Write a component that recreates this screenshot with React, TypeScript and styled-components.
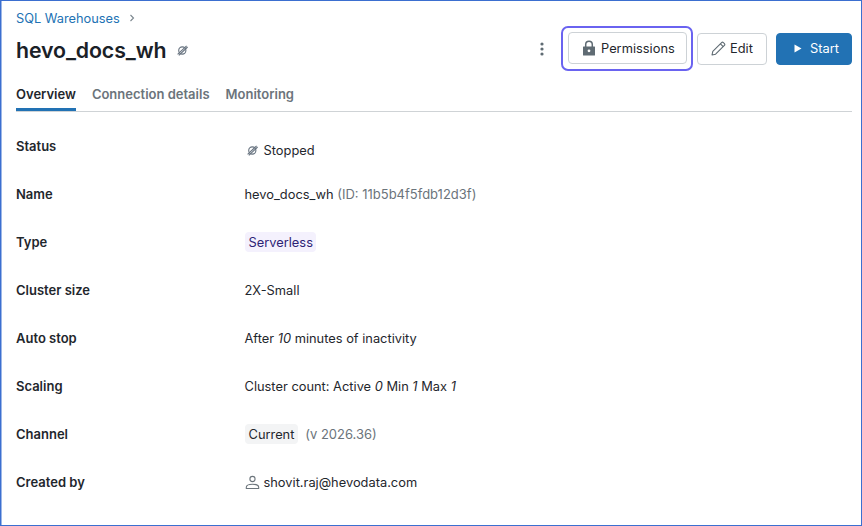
import React from 'react'
import styled, { createGlobalStyle } from 'styled-components'

const GlobalStyle = createGlobalStyle`
  html, body {
    margin: 0;
    padding: 0;
    background: #fff;
  }
  body {
    font-family: Inter, "Liberation Sans", sans-serif;
    color: #1f272d;
  }
`

const Frame = styled.div`
  box-sizing: border-box;
  width: 862px;
  height: 526px;
  border: 1px solid #3b6fd0;
  box-shadow: inset 1px 0 0 rgba(59, 111, 208, 0.5);
  padding: 0 9px 0 15px;
  background: #fff;
  overflow: hidden;
`

const Breadcrumb = styled.div`
  display: flex;
  align-items: center;
  gap: 8px;
  height: 16px;
  margin-top: 9px;
  font-size: 12.8px;
  color: #2272b4;

  svg {
    color: #7b868e;
  }
`

const HeaderRow = styled.div`
  display: flex;
  align-items: center;
  justify-content: space-between;
  height: 45px;
`

const TitleGroup = styled.div`
  display: flex;
  align-items: center;
  gap: 11px;
  margin-top: 3px;
`

const Title = styled.h1`
  margin: 0;
  font-size: 21.3px;
  font-weight: 600;
  letter-spacing: -0.1px;
  color: #1a2127;
`

const Actions = styled.div`
  display: flex;
  align-items: center;
`

const MoreButton = styled.div`
  display: flex;
  margin-right: 17px;
  color: #5f6b73;
`

const FocusRing = styled.div`
  display: flex;
  padding: 4px 4px 5px 5px;
  border: 2px solid #6a63f0;
  border-radius: 7px;
  margin-right: 4px;
`

const Button = styled.div<{ $primary?: boolean }>`
  box-sizing: border-box;
  display: flex;
  align-items: center;
  height: 32px;
  border-radius: 4px;
  font-size: 12.85px;
  border: 1px solid ${({ $primary }) => ($primary ? '#2272b4' : '#cdd2d6')};
  background: ${({ $primary }) => ($primary ? '#2272b4' : '#fff')};
  color: ${({ $primary }) => ($primary ? '#fff' : '#1f272d')};
`

const PermissionsButton = styled(Button)`
  width: 119px;
  gap: 5px;
  padding-left: 13px;
`

const EditButton = styled(Button)`
  width: 70px;
  gap: 4px;
  padding-left: 13px;
  margin-right: 9px;
`

const StartButton = styled(Button)`
  width: 76px;
  gap: 8px;
  padding-left: 17px;
`

const Tabs = styled.div`
  box-sizing: border-box;
  display: flex;
  gap: 16px;
  height: 41px;
  border-bottom: 1px solid #cfd3d6;
`

const Tab = styled.div<{ $active?: boolean }>`
  box-sizing: border-box;
  height: 40px;
  padding-top: 15px;
  font-size: 13px;
  font-weight: 600;
  color: ${({ $active }) => ($active ? '#1f272d' : '#6b747b')};
  border-bottom: 3px solid ${({ $active }) => ($active ? '#2272b4' : 'transparent')};
`

const Details = styled.div`
  display: grid;
  grid-template-columns: 228.5px 1fr;
  grid-auto-rows: 48px;
  margin-top: 22px;
`

const Label = styled.div`
  font-size: 13px;
  font-weight: 600;
  line-height: 24px;
  color: #1f272d;
`

const Value = styled.div<{ $offset?: number }>`
  display: flex;
  align-items: center;
  height: 24px;
  margin-top: ${({ $offset }) => $offset ?? 0}px;
  font-size: 12.85px;
  color: #1f272d;

  em {
    font-style: italic;
    white-space: pre;
  }
`

const Muted = styled.span`
  font-size: 13px;
  color: #6b747b;
  white-space: pre;
`

const Tag = styled.span<{ $purple?: boolean }>`
  display: inline-flex;
  align-items: center;
  height: 20px;
  padding: 0 3.5px 0 4px;
  border-radius: 4px;
  background: ${({ $purple }) => ($purple ? '#f4f1fd' : '#f3f4f5')};
  color: ${({ $purple }) => ($purple ? '#2d2375' : '#1f272d')};
`

const IconSlot = styled.span<{ $inset?: number; $gap: number }>`
  display: inline-flex;
  margin-left: ${({ $inset }) => $inset ?? 0}px;
  margin-right: ${({ $gap }) => $gap}px;
  color: #6b747b;
`

const Stopped = () => (
  <svg width="11" height="11" viewBox="0 0 11 11" fill="none" stroke="#66727f" strokeWidth="1.1">
    <circle cx="5.3" cy="5.5" r="3.6" />
    <path d="M0.6 9.4L9.6 0.8" />
    <path d="M1.8 10.4L10.6 2" />
  </svg>
)

const Chevron = () => (
  <svg width="8" height="8" viewBox="0 0 8 8" fill="none" stroke="currentColor" strokeWidth="1.1">
    <path d="M2.5 1L5.5 4L2.5 7" />
  </svg>
)

const Kebab = () => (
  <svg width="4" height="14" viewBox="0 0 4 14" fill="currentColor">
    <circle cx="2" cy="2" r="1.6" />
    <circle cx="2" cy="7" r="1.6" />
    <circle cx="2" cy="12" r="1.6" />
  </svg>
)

const Lock = () => (
  <svg width="14" height="16" viewBox="0 0 14 16">
    <path d="M3.7 7V4.6a3.3 3.3 0 0 1 6.6 0V7" fill="none" stroke="#5f6b73" strokeWidth="1.5" />
    <path
      fillRule="evenodd"
      fill="#5f6b73"
      d="M1.5 6.5h11a.5.5 0 0 1 .5.5v8a.5.5 0 0 1-.5.5h-11A.5.5 0 0 1 1 15V7a.5.5 0 0 1 .5-.5zM7 9.4a1.4 1.4 0 1 0 0 2.8 1.4 1.4 0 0 0 0-2.8z"
    />
  </svg>
)

const Pencil = () => (
  <svg width="15" height="15" viewBox="0 0 15 15" fill="none" stroke="#5f6b73" strokeWidth="1.1" strokeLinejoin="round">
    <path d="M1 14l.8-3.6L10.6 1.6a1.3 1.3 0 0 1 1.8 0l1 1a1.3 1.3 0 0 1 0 1.8L4.6 13.2z" />
    <path d="M9.4 2.8l2.8 2.8" />
  </svg>
)

const Play = () => (
  <svg width="8" height="9" viewBox="0 0 8 9" fill="#fff">
    <path d="M0.5 0.5L7.5 4.5L0.5 8.5z" />
  </svg>
)

const User = () => (
  <svg width="15" height="15" viewBox="0 0 15 15" fill="none" stroke="currentColor" strokeWidth="1.1">
    <circle cx="7.5" cy="4" r="2.6" />
    <path d="M1.3 13.5v-1.2c0-1.6 2.6-3 6.2-3s6.2 1.4 6.2 3v1.2z" strokeLinejoin="round" />
  </svg>
)

const App: React.FC = () => {
  return (
    <>
      <GlobalStyle />
      <Frame>
        <Breadcrumb>
          SQL Warehouses
          <Chevron />
        </Breadcrumb>
        <HeaderRow>
          <TitleGroup>
            <Title>hevo_docs_wh</Title>
            <Stopped />
          </TitleGroup>
          <Actions>
            <MoreButton>
              <Kebab />
            </MoreButton>
            <FocusRing>
              <PermissionsButton>
                <Lock />
                Permissions
              </PermissionsButton>
            </FocusRing>
            <EditButton>
              <Pencil />
              Edit
            </EditButton>
            <StartButton $primary>
              <Play />
              Start
            </StartButton>
          </Actions>
        </HeaderRow>
        <Tabs>
          <Tab $active>Overview</Tab>
          <Tab>Connection details</Tab>
          <Tab>Monitoring</Tab>
        </Tabs>
        <Details>
          <Label>Status</Label>
          <Value $offset={4}>
            <IconSlot $inset={2} $gap={6}>
              <Stopped />
            </IconSlot>
            Stopped
          </Value>

          <Label>Name</Label>
          <Value>
            hevo_docs_wh<Muted> (ID: 11b5b4f5fdb12d3f)</Muted>
          </Value>

          <Label>Type</Label>
          <Value>
            <Tag $purple>Serverless</Tag>
          </Value>

          <Label>Cluster size</Label>
          <Value>2X-Small</Value>

          <Label>Auto stop</Label>
          <Value>
            After&nbsp;<em>10</em>&nbsp;minutes of inactivity
          </Value>

          <Label>Scaling</Label>
          <Value>
            Cluster count: Active&nbsp;<em>0</em>&nbsp;Min&nbsp;<em>1</em>&nbsp;Max&nbsp;<em>1</em>
          </Value>

          <Label>Channel</Label>
          <Value>
            <Tag>Current</Tag>
            <Muted>  (v 2026.36)</Muted>
          </Value>

          <Label>Created by</Label>
          <Value>
            <IconSlot $gap={4}>
              <User />
            </IconSlot>
            shovit.raj@hevodata.com
          </Value>
        </Details>
      </Frame>
    </>
  )
}

export default App
